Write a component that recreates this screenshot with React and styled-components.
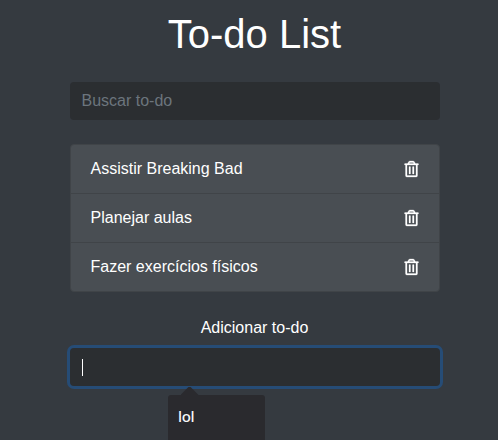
import React from 'react';
import styled, { createGlobalStyle } from 'styled-components';

const Global = createGlobalStyle`
  *, *::before, *::after { box-sizing: border-box; }
  body {
    margin: 0;
    background: #353a40;
    color: #fff;
    font: 400 16px/24px "Liberation Sans", Arial, sans-serif;
  }
`;

const Screen = styled.div`
  height: 100vh;
  overflow: hidden;
`;

const Page = styled.main`
  width: 370px;
  margin-left: 69.5px;
  padding-top: 10px;
`;

const Title = styled.h1`
  margin: 0 0 24px;
  font-size: 40px;
  font-weight: 400;
  line-height: 48px;
  text-align: center;
`;

const Field = styled.div`
  position: relative;
  display: flex;
  align-items: center;
  height: 38px;
  padding: 0 12px;
  border-radius: 4px;
  background: #2b2e31;
  color: #6c757d;
  box-shadow: ${(p) => (p.$focused ? '0 0 0 3px #264c76' : 'none')};
`;

const List = styled.ul`
  list-style: none;
  margin: 24px 0;
  padding: 0;
  border: 1px solid #404448;
  border-radius: 4px;
  background: #494e53;
  overflow: hidden;
`;

const Item = styled.li`
  display: flex;
  align-items: center;
  justify-content: space-between;
  height: 48px;
  padding: 0 20px;
  & + & { border-top: 1px solid #404448; height: 49px; }
`;

const Label = styled.label`
  display: block;
  text-align: center;
  margin-bottom: 8px;
`;

const Caret = styled.span`
  width: 1px;
  height: 17px;
  margin-top: 1px;
  background: #fff;
`;

const Suggestions = styled.div`
  position: absolute;
  top: 47px;
  left: 98px;
  width: 97px;
  height: 60px;
  padding: 10px 10.5px;
  border-radius: 3px;
  background: #2a2a2e;
  color: #f9f9fa;
  font: 500 15px/22px "Noto Sans", sans-serif;
  letter-spacing: -0.4px;
  &::before {
    content: '';
    position: absolute;
    left: 13px;
    top: -8px;
    width: 18px;
    height: 8px;
    background: #2a2a2e;
    clip-path: polygon(44% 0, 56% 0, 100% 100%, 0 100%);
  }
`;

const Icon = styled.svg`
  display: block;
  overflow: visible;
`;

const Trash = () => (
  <Icon width="15" height="16" viewBox="-16 0 480 512" fill="currentColor" stroke="currentColor" strokeWidth="9">
    <path d="M268 416h24a12 12 0 0 0 12-12V188a12 12 0 0 0-12-12h-24a12 12 0 0 0-12 12v216a12 12 0 0 0 12 12zM432 80h-82.41l-34-56.7A48 48 0 0 0 274.41 0H173.59a48 48 0 0 0-41.16 23.3L98.41 80H16A16 16 0 0 0 0 96v16a16 16 0 0 0 16 16h16v336a48 48 0 0 0 48 48h288a48 48 0 0 0 48-48V128h16a16 16 0 0 0 16-16V96a16 16 0 0 0-16-16zM171.84 50.91A6 6 0 0 1 177 48h94a6 6 0 0 1 5.15 2.91L293.61 80H154.39zM368 464H80V128h288zm-212-48h24a12 12 0 0 0 12-12V188a12 12 0 0 0-12-12h-24a12 12 0 0 0-12 12v216a12 12 0 0 0 12 12z" />
  </Icon>
);

const todos = ['Assistir Breaking Bad', 'Planejar aulas', 'Fazer exercícios físicos'];

export default function App() {
  return (
    <Screen>
      <Global />
      <Page>
        <Title>To-do List</Title>
        <Field>Buscar to-do</Field>
        <List>
          {todos.map((t) => (
            <Item key={t}><span>{t}</span><Trash /></Item>
          ))}
        </List>
        <Label>Adicionar to-do</Label>
        <Field $focused>
          <Caret />
          <Suggestions>lol</Suggestions>
        </Field>
      </Page>
    </Screen>
  );
}
